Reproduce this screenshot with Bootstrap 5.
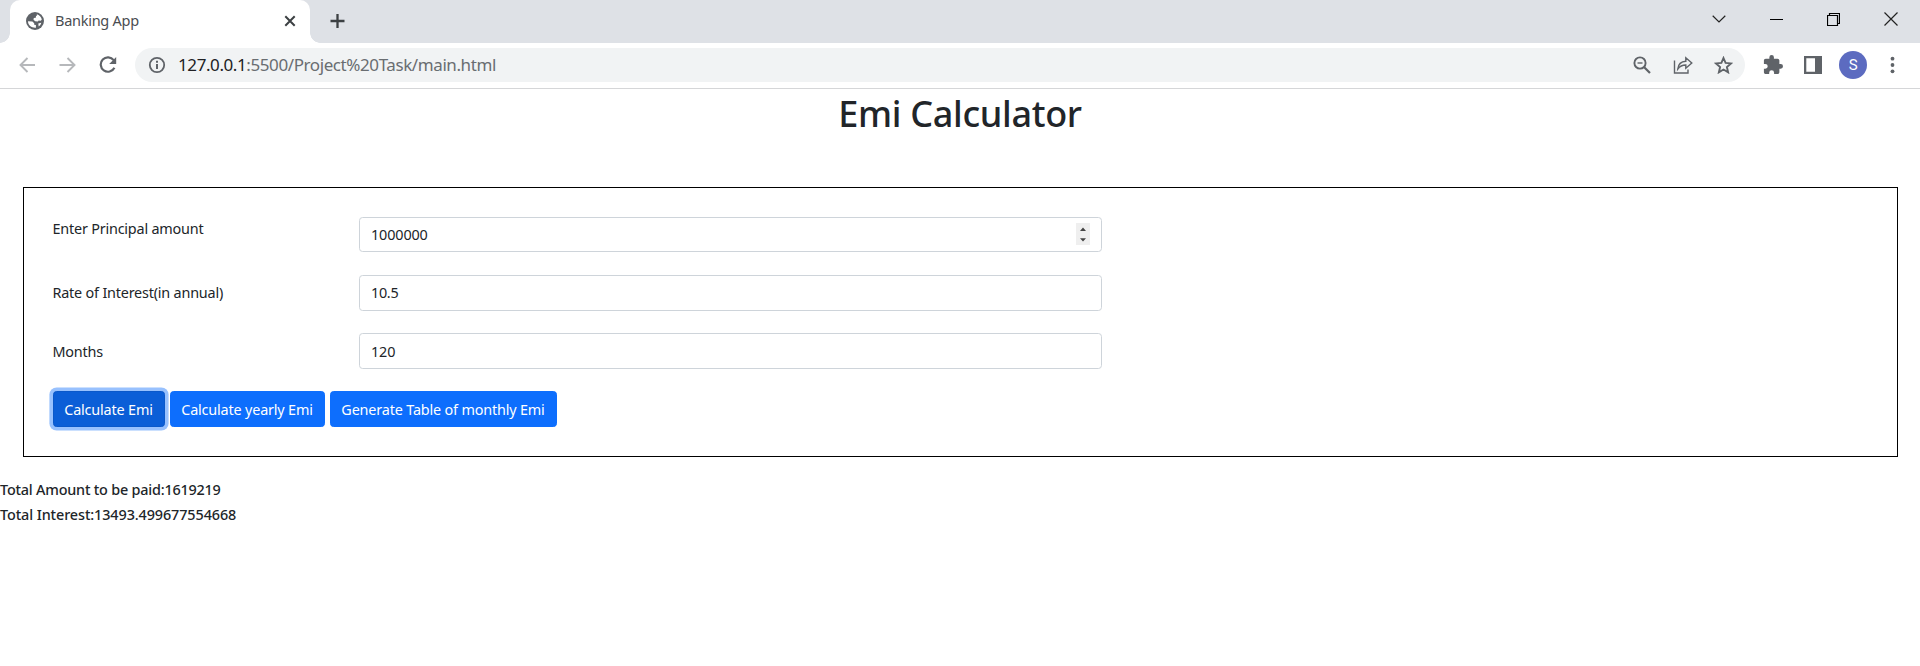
<!DOCTYPE html>
<html lang="en">
<head>
<meta charset="utf-8">
<title>Banking App</title>
<link href="https://cdn.jsdelivr.net/npm/bootstrap@5.3.0/dist/css/bootstrap.min.css" rel="stylesheet">
<style>
  html { font-size: 14.4px; }
  body { font-family: "Noto Sans", "Open Sans", sans-serif; font-size: 14.4px; line-height: 21.6px; letter-spacing: -.17px; height: 666px; overflow: hidden; }
  svg { display: block; flex: none; }
  .tab-strip { height: 43px; background: #dee1e6; padding-left: 10px; }
  .browser-tab { width: 300px; background: #fff; border-radius: 10px 10px 0 0; padding: 0 14px 2px 16px; font-size: 14.5px; letter-spacing: -.27px; color: #4a4d51; }
  .browser-tab::before, .browser-tab::after { content: ""; position: absolute; bottom: 0; width: 10px; height: 10px; }
  .browser-tab::before { left: -10px; background: radial-gradient(circle at 0 0, #dee1e6 9.5px, #fff 10px); }
  .browser-tab::after { right: -10px; background: radial-gradient(circle at 100% 0, #dee1e6 9.5px, #fff 10px); }
  .browser-tab span { margin-left: 11px; }
  .window-buttons { padding-right: 22px; gap: 44px; padding-bottom: 6px; }
  .toolbar { height: 46px; border-bottom: 1px solid #d5d6d8; padding: 0 25px 1px 17px; }
  .omnibox { height: 34px; margin-left: 17px; background: #f1f3f4; border-radius: 17px; padding: 0 12px 0 13px; }
  .address { margin-left: 12px; font-size: 17px; letter-spacing: -.41px; color: #696d71; }
  .address b { font-weight: 400; color: #202124; }
  .avatar { width: 28px; height: 28px; background: #5c6bc0; font: 15px Roboto, sans-serif; }
  h1 { font-size: 36px; font-weight: 500; letter-spacing: -.32px; line-height: 43px; margin: 3px 0 0; }
  .emi-box { margin: 52px 22px 0 23px; height: 270px; border: 1px solid #000; padding: 29px 29px 29px 28.5px; }
  .emi-row { height: 58px; }
  .emi-row label { width: 306.5px; color: #212529; padding-top: 7px; letter-spacing: -.2px; }
  .emi-row:first-child label { padding-top: 1px; }
  .emi-row:nth-child(3) label { padding-top: 8px; }
  .emi-row .form-control { width: 743px; height: 36px; font-size: 14.4px; letter-spacing: -.13px; line-height: 22px; padding: 6px 12px 6px 11px; border-color: #ced4da; border-radius: 3.6px; }
  .emi-row:nth-child(2) .form-control { padding-top: 5px; padding-bottom: 7px; letter-spacing: -.3px; }
  .emi-row:first-child .form-control { height: 35px; }
  .stepper { right: 12px; top: 6px; width: 14px; height: 22px; background: #efefef; }
  .emi-box .btn { height: 36px; font-size: 14.4px; line-height: 22px; padding: 7px 0 5px; border-radius: 3.6px; background: #0d6efd; border-color: #0d6efd; letter-spacing: -.17px; }
  .emi-box .btn.pressed { background: #0b5ed7; border-color: #0a58ca; box-shadow: 0 0 0 3.6px #98c1fe; }
  .totals { margin-top: 20px; font-weight: 500; line-height: 25px; letter-spacing: -.2px; }
  .totals div + div { letter-spacing: -.1px; }
</style>
</head>
<body class="bg-white">
<header>
  <div class="tab-strip d-flex">
    <div class="browser-tab position-relative d-flex align-items-center">
      <svg width="18" height="18" viewBox="0 0 18 18"><circle cx="9" cy="9" r="9" fill="#5f6368"/><path d="M2 9.3l4.400.300 1.800 1.600v1.500l1.700.400v2.600C5.900 16.100 2 13.500 2 9.300zM10.800 2.200c2.500.6 4.500 2.700 5 5.300l-1 1.200-2.200-.3-.7 1-2.700-.2-1.700-1.400.3-1.700 2-.4.2-1.600 1-.5zM12.300 11.400l3-.6c-.5 1.700-1.400 2.900-2.600 3.700z" fill="#fff"/></svg>
      <span class="me-auto">Banking App</span>
      <svg width="12" height="12" viewBox="0 0 12 12"><path d="M1.300 1.300l9.400 9.400M10.700 1.300l-9.400 9.400" stroke="#3c4043" stroke-width="2"/></svg>
    </div>
    <svg class="me-auto" style="margin:13px 0 0 15px" width="24" height="16" viewBox="0 0 24 16"><path d="M12.500 1v14M5.500 8h14" stroke="#3c4043" stroke-width="2.300"/></svg>
    <div class="window-buttons d-flex align-items-center">
      <svg width="14" height="14" viewBox="0 0 14 14"><path d="M.7 3.800L7 10l6.300-6.200" fill="none" stroke="#222" stroke-width="1.200"/></svg>
      <svg width="13" height="14" viewBox="0 0 13 14"><path d="M0 7.500h13" stroke="#000"/></svg>
      <svg width="13" height="14" viewBox="0 0 13 14"><path d="M.5 3.500h10v10H.5zM2.500 3.500v-2h10v10h-2" fill="none" stroke="#000" stroke-width="1.200"/></svg>
      <svg width="14" height="14" viewBox="0 0 14 14"><path d="M.5.5l13 13M13.500.5l-13 13" stroke="#222" stroke-width="1.200"/></svg>
    </div>
  </div>

  <div class="toolbar d-flex align-items-center">
    <svg width="21" height="18" viewBox="0 0 21 18"><path d="M18 9H4M10.500 2L3.500 9l7 7" fill="none" stroke="#b6b8bb" stroke-width="1.900"/></svg>
    <svg style="margin-left:19px" width="21" height="18" viewBox="0 0 21 18"><path d="M2.500 9h14.500M10.500 2l7 7-7 7" fill="none" stroke="#b6b8bb" stroke-width="1.900"/></svg>
    <svg style="margin-left:20px" width="20" height="18" viewBox="0 0 20 18"><path d="M15.700 4.200A7.200 7.200 0 1 0 16.400 11.700" fill="none" stroke="#5f6368" stroke-width="2.200"/><path d="M18.200 1v7h-7z" fill="#5f6368"/></svg>
    <div class="omnibox flex-grow-1 d-flex align-items-center">
      <svg width="18" height="18" viewBox="0 0 18 18"><circle cx="9" cy="9" r="7.200" fill="none" stroke="#5f6368" stroke-width="1.800"/><path d="M9 8v5M9 4.800v1.900" stroke="#5f6368" stroke-width="2"/></svg>
      <span class="address me-auto"><b>127.0.0.1</b>:5500/Project%20Task/main.html</span>
      <svg width="18" height="18" viewBox="0 0 18 18"><circle cx="7" cy="7" r="5.600" fill="none" stroke="#5f6368" stroke-width="1.900"/><path d="M4.500 7h5" stroke="#5f6368" stroke-width="1.400"/><path d="M11 11l6 6" stroke="#5f6368" stroke-width="2.200"/></svg>
      <svg style="margin-left:22px" width="20" height="18" viewBox="0 0 20 18"><path d="M1.500 4.500v12.500h13.500v-3.500M4.800 13c.5-4.700 3.500-7.500 8-7.700V1.800l6 5.200-6 5.300V9c-3.500 0-6 1.200-8 4z" fill="none" stroke="#5f6368" stroke-width="1.400"/></svg>
      <svg style="margin-left:21px" width="19" height="18" viewBox="0 0 19 18"><path d="M9.500 2l2.100 4.900 5.400.5-4.100 3.600 1.200 5.300-4.600-2.800-4.600 2.800 1.200-5.300-4.100-3.600 5.400-.5z" fill="none" stroke="#5f6368" stroke-width="1.900"/></svg>
    </div>
    <svg style="margin-left:18px" width="20" height="20" viewBox="0 0 22 22"><path d="M20.500 11H19V7c0-1.100-.9-2-2-2h-4V3.500a2.500 2.500 0 0 0-5 0V5H4c-1.100 0-2 .9-2 2v3.800h1.500a2.700 2.700 0 0 1 0 5.400H2V20c0 1.100.9 2 2 2h3.800v-1.500a2.700 2.700 0 0 1 5.400 0V22H17c1.100 0 2-.9 2-2v-4h1.500a2.500 2.500 0 0 0 0-5z" transform="translate(-1 -1)" fill="#5f6368"/></svg>
    <svg style="margin-left:21px" width="18" height="18" viewBox="0 0 18 18"><path fill-rule="evenodd" d="M0 0h18v18H0zM2.300 2.300v13.400h8.700V2.300z" fill="#5f6368"/></svg>
    <div class="avatar rounded-circle text-white d-flex align-items-center justify-content-center" style="margin-left:17px">S</div>
    <svg style="margin-left:23px" width="5" height="18" viewBox="0 0 5 18"><g fill="#5f6368"><circle cx="2.500" cy="2.700" r="1.900"/><circle cx="2.500" cy="9" r="1.900"/><circle cx="2.500" cy="15.300" r="1.900"/></g></svg>
  </div>
</header>

<main>
  <h1 class="text-center">Emi Calculator</h1>
  <form class="emi-box">
    <div class="emi-row d-flex align-items-start">
      <label for="principal">Enter Principal amount</label>
      <div class="position-relative">
        <input id="principal" class="form-control" type="text" value="1000000">
        <svg class="stepper position-absolute" viewBox="0 0 14 22"><path d="M4 8l3-3.500L10 8zM4 15.200l3 3.300 3-3.300z" fill="#444"/></svg>
      </div>
    </div>
    <div class="emi-row d-flex align-items-start">
      <label for="rate">Rate of Interest(in annual)</label>
      <input id="rate" class="form-control" type="text" value="10.5">
    </div>
    <div class="emi-row d-flex align-items-start">
      <label for="months">Months</label>
      <input id="months" class="form-control" type="text" value="120">
    </div>
    <div class="d-flex" style="gap:5px">
      <button type="button" class="btn btn-primary pressed" style="width:112px">Calculate Emi</button>
      <button type="button" class="btn btn-primary" style="width:155px">Calculate yearly Emi</button>
      <button type="button" class="btn btn-primary" style="width:227px">Generate Table of monthly Emi</button>
    </div>
  </form>
  <div class="totals">
    <div>Total Amount to be paid:1619219</div>
    <div>Total Interest:13493.499677554668</div>
  </div>
</main>
<script src="https://cdn.jsdelivr.net/npm/bootstrap@5.3.0/dist/js/bootstrap.bundle.min.js"></script>
</body>
</html>
